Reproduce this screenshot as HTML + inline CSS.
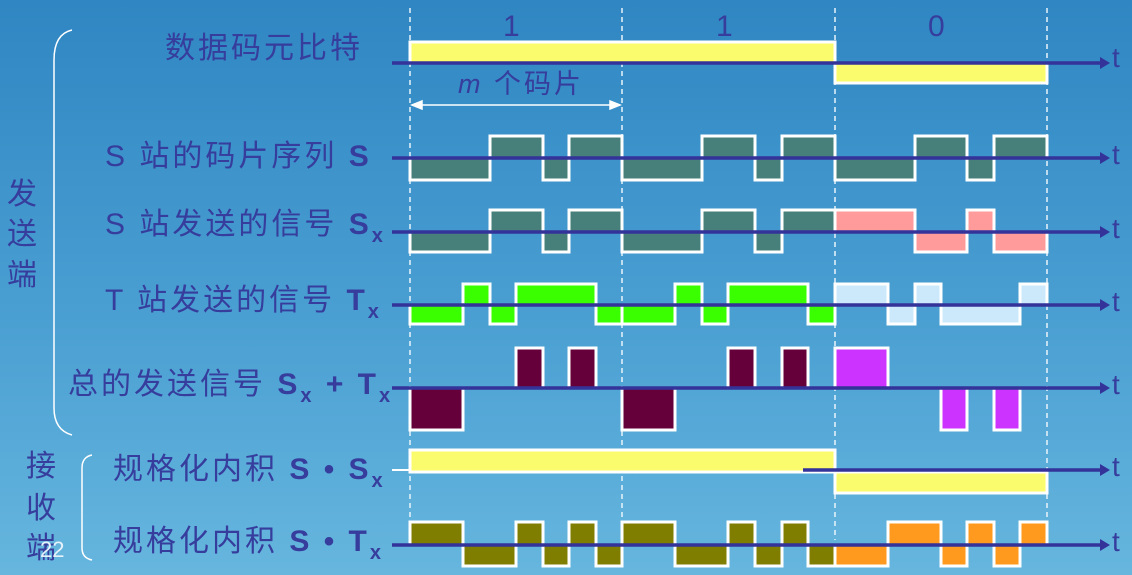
<!DOCTYPE html>
<html><head><meta charset="utf-8"><style>
html,body{margin:0;padding:0}
body{width:1132px;height:575px;overflow:hidden;background:linear-gradient(180deg,#2f86c2 0%,#4a9fd2 55%,#66b6de 100%);}
svg{position:absolute;left:0;top:0}
text{font-family:"Liberation Sans","Noto Sans CJK SC",sans-serif;fill:#363d9c}
</style></head><body>
<svg width="1132" height="575" viewBox="0 0 1132 575">
<g stroke="#e8f4fb" stroke-width="1.5" stroke-dasharray="5,4">
<line x1="410" y1="8" x2="410" y2="540"/><line x1="622" y1="8" x2="622" y2="540"/><line x1="835" y1="8" x2="835" y2="540"/><line x1="1047" y1="8" x2="1047" y2="540"/>
</g>
<g font-size="30"><text x="503" y="36">1</text><text x="716" y="36">1</text><text x="928" y="36">0</text></g>
<g stroke="#fff" stroke-width="3">
<rect x="410" y="42" width="425" height="21" fill="#fbfb6e"/>
<rect x="835" y="63" width="212" height="20" fill="#fbfb6e"/>
<g fill="#47807a">
<rect x="410" y="158" width="80" height="22"/><rect x="490" y="136" width="53" height="22"/><rect x="543" y="158" width="26" height="22"/><rect x="569" y="136" width="53" height="22"/>
<rect x="622" y="158" width="80" height="22"/><rect x="702" y="136" width="53" height="22"/><rect x="755" y="158" width="27" height="22"/><rect x="782" y="136" width="53" height="22"/>
<rect x="835" y="158" width="80" height="22"/><rect x="915" y="136" width="52" height="22"/><rect x="967" y="158" width="27" height="22"/><rect x="994" y="136" width="53" height="22"/>
<rect x="410" y="232" width="80" height="20"/><rect x="490" y="210" width="53" height="22"/><rect x="543" y="232" width="26" height="20"/><rect x="569" y="210" width="53" height="22"/>
<rect x="622" y="232" width="80" height="20"/><rect x="702" y="210" width="53" height="22"/><rect x="755" y="232" width="27" height="20"/><rect x="782" y="210" width="53" height="22"/>
</g>
<g fill="#ff9b9b">
<rect x="835" y="210" width="80" height="22"/><rect x="915" y="232" width="52" height="20"/><rect x="967" y="210" width="27" height="22"/><rect x="994" y="232" width="53" height="20"/>
</g>
<g fill="#39ff00">
<rect x="410" y="305" width="53" height="19"/><rect x="463" y="284" width="27" height="21"/><rect x="490" y="305" width="26" height="19"/><rect x="516" y="284" width="80" height="21"/><rect x="596" y="305" width="26" height="19"/>
<rect x="622" y="305" width="53" height="19"/><rect x="675" y="284" width="27" height="21"/><rect x="702" y="305" width="26" height="19"/><rect x="728" y="284" width="80" height="21"/><rect x="808" y="305" width="27" height="19"/>
</g>
<g fill="#cce9fb">
<rect x="835" y="284" width="53" height="21"/><rect x="888" y="305" width="27" height="19"/><rect x="915" y="284" width="26" height="21"/><rect x="941" y="305" width="79" height="19"/><rect x="1020" y="284" width="27" height="21"/>
</g>
<g fill="#66003a">
<rect x="410" y="388" width="53" height="42"/><rect x="516" y="348" width="27" height="40"/><rect x="569" y="348" width="27" height="40"/>
<rect x="622" y="388" width="53" height="42"/><rect x="728" y="348" width="27" height="40"/><rect x="782" y="348" width="26" height="40"/>
</g>
<g fill="#cc33ff">
<rect x="835" y="348" width="53" height="40"/><rect x="941" y="388" width="26" height="42"/><rect x="994" y="388" width="26" height="42"/>
</g>
<rect x="410" y="450" width="425" height="22" fill="#fbfb6e"/>
<rect x="835" y="472" width="212" height="21" fill="#fbfb6e"/>
<g fill="#807e00">
<rect x="410" y="522" width="53" height="23"/><rect x="463" y="545" width="53" height="21"/><rect x="516" y="522" width="27" height="23"/><rect x="543" y="545" width="26" height="21"/><rect x="569" y="522" width="27" height="23"/><rect x="596" y="545" width="26" height="21"/>
<rect x="622" y="522" width="53" height="23"/><rect x="675" y="545" width="53" height="21"/><rect x="728" y="522" width="27" height="23"/><rect x="755" y="545" width="27" height="21"/><rect x="782" y="522" width="26" height="23"/><rect x="808" y="545" width="27" height="21"/>
</g>
<g fill="#ff9a1e">
<rect x="835" y="545" width="53" height="21"/><rect x="888" y="522" width="53" height="23"/><rect x="941" y="545" width="26" height="21"/><rect x="967" y="522" width="27" height="23"/><rect x="994" y="545" width="26" height="21"/><rect x="1020" y="522" width="27" height="23"/>
</g>
</g>
<line x1="392" y1="470" x2="410" y2="470" stroke="#fff" stroke-width="2"/>
<g stroke="#333399" stroke-width="3.5">
<line x1="392" y1="63" x2="1100" y2="63"/><line x1="392" y1="158" x2="1100" y2="158"/><line x1="392" y1="232" x2="1100" y2="232"/><line x1="392" y1="305" x2="1100" y2="305"/><line x1="392" y1="388" x2="1100" y2="388"/><line x1="803" y1="470" x2="1100" y2="470"/><line x1="392" y1="545" x2="1100" y2="545"/>
</g>
<g fill="#333399"><path d="M1100 57L1110 63L1100 69Z"/><path d="M1100 152L1110 158L1100 164Z"/><path d="M1100 226L1110 232L1100 238Z"/><path d="M1100 299L1110 305L1100 311Z"/><path d="M1100 382L1110 388L1100 394Z"/><path d="M1100 464L1110 470L1100 476Z"/><path d="M1100 539L1110 545L1100 551Z"/></g>
<g font-size="28"><text x="1112" y="67">t</text><text x="1112" y="164">t</text><text x="1112" y="238">t</text><text x="1112" y="311">t</text><text x="1112" y="394">t</text><text x="1112" y="476">t</text><text x="1112" y="551">t</text></g>
<g stroke="#fff" stroke-width="1.5" fill="#fff"><line x1="412" y1="105" x2="620" y2="105"/><path d="M412 105l10-4v8z"/><path d="M620 105l-10-4v8z"/></g>
<text x="458" y="93" font-size="27" letter-spacing="3"><tspan font-style="italic">m</tspan> 个码片</text>
<g font-size="30" letter-spacing="3">
<text x="165" y="58">数据码元比特</text>
<text x="105" y="166">S 站的码片序列 <tspan font-weight="bold">S</tspan></text>
<text x="105" y="234">S 站发送的信号 <tspan font-weight="bold">S</tspan><tspan font-weight="bold" font-size="20" dy="8">x</tspan></text>
<text x="105" y="310">T 站发送的信号 <tspan font-weight="bold">T</tspan><tspan font-weight="bold" font-size="20" dy="8">x</tspan></text>
<text x="68" y="394">总的发送信号 <tspan font-weight="bold">S</tspan><tspan font-weight="bold" font-size="20" dy="8">x</tspan><tspan font-weight="bold" dy="-8"> + T</tspan><tspan font-weight="bold" font-size="20" dy="8">x</tspan></text>
<text x="113" y="479">规格化内积 <tspan font-weight="bold">S • S</tspan><tspan font-weight="bold" font-size="20" dy="8">x</tspan></text>
<text x="113" y="551">规格化内积 <tspan font-weight="bold">S • T</tspan><tspan font-weight="bold" font-size="20" dy="8">x</tspan></text>
<text x="7" y="204">发</text><text x="7" y="244">送</text><text x="7" y="285">端</text>
<text x="26" y="476">接</text><text x="26" y="518">收</text><text x="26" y="558">端</text>
</g>
<text x="40" y="557" font-size="22" style="fill:#e6f2fa">22</text>
<g stroke="#fff" stroke-width="1.5" fill="none">
<path d="M72 30Q54 34 54 60V408Q54 430 72 435"/>
<path d="M92 455Q82 457 82 468V548Q82 558 92 560"/>
</g>
</svg>
</body></html>
